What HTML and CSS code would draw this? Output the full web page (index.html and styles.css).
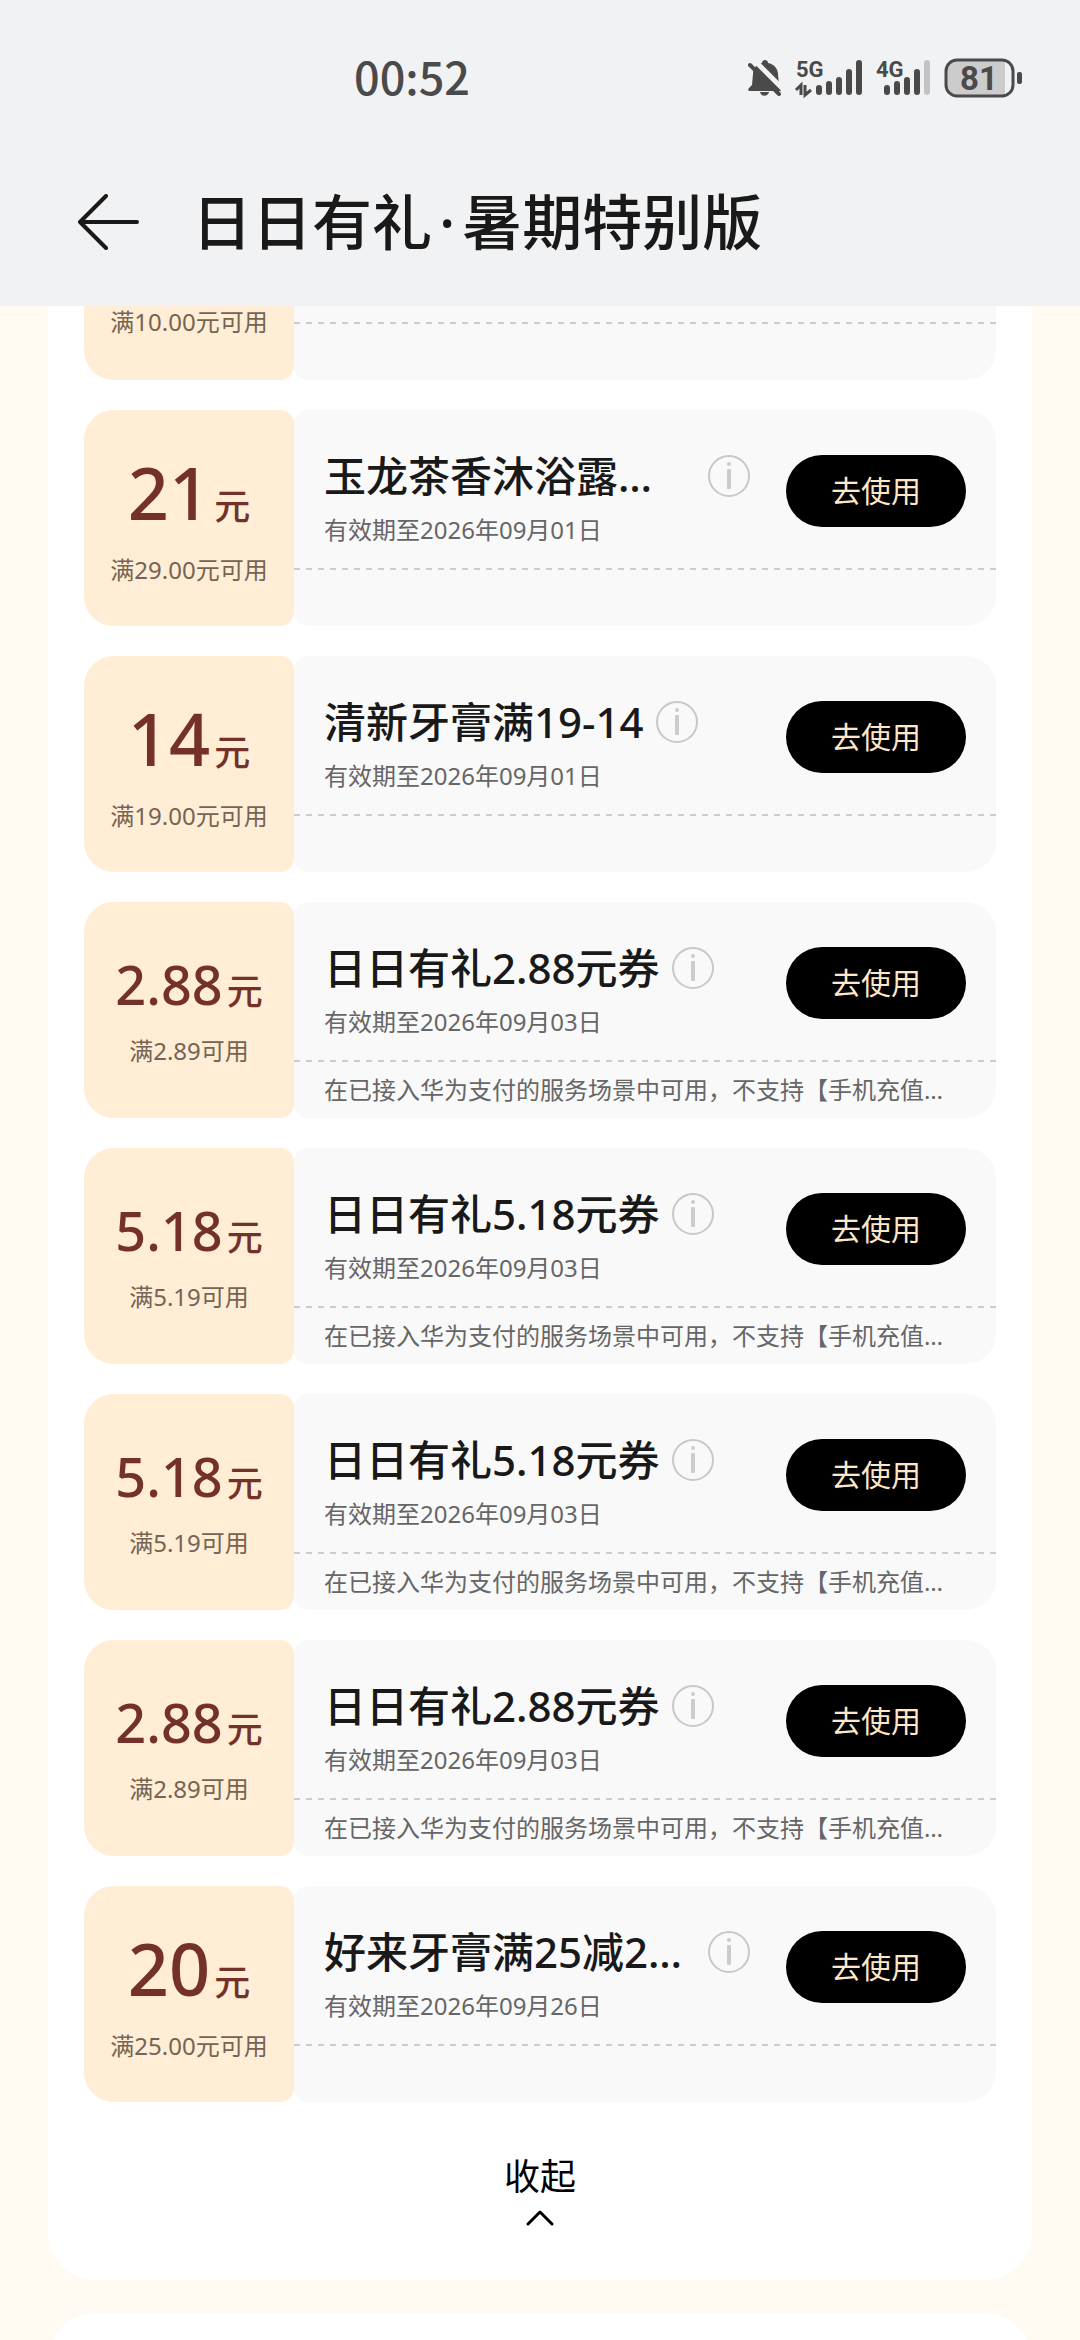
FILE: index.html
```html
<!DOCTYPE html>
<html lang="zh-CN">
<head>
  <meta charset="UTF-8">
  <meta name="viewport" content="width=device-width, initial-scale=1.0">
  <title>日日有礼·暑期特别版</title>
  <link rel="stylesheet" href="styles.css">
</head>
<body>
  <!-- Shared icon -->
  <svg class="sprite" aria-hidden="true">
    <symbol id="icon-info" viewBox="0 0 42 42">
      <circle cx="21" cy="21" r="20" fill="none" stroke="#c8c8c8" stroke-width="2"/>
      <rect x="19" y="14" width="4" height="20" rx="1" fill="#cccccc"/>
      <circle cx="21" cy="9" r="2" fill="#cccccc"/>
    </symbol>
  </svg>

  <header class="header">
    <div class="status-bar">
      <time class="clock">00:52</time>
      <div class="status-icons">
        <svg class="icon-bell" viewBox="0 0 34 36" width="34" height="36">
          <path d="M1 31 C0 30 0 29 1 28 L4 25 L5 14 C5 8 9 4 14 3 C14 -1 20 -1 20 3 C26 4 30 9 30 14 L31 25 L33 31 Z" fill="#4a4a4a"/>
          <path d="M12 32 H21 C20 37 13 37 12 32 Z" fill="#4a4a4a"/>
          <path d="M5 -1 L38 32" stroke="#f1f2f4" stroke-width="5"/>
          <path d="M2 5 L31 34" stroke="#4a4a4a" stroke-width="4" stroke-linecap="round"/>
        </svg>
        <svg class="icon-signal" viewBox="0 0 66 46" width="66" height="46">
          <text class="signal-text" x="0" y="22">5G</text>
          <path d="M0 35 L5 30 V40 M9 30 V40 L15 35" fill="none" stroke="#4a4a4a" stroke-width="3"/>
          <path d="M23 33 V37 M33 29 V37 M43 25 V37 M53 17 V37 M63 8 V37" stroke="#4a4a4a" stroke-width="6" stroke-linecap="round"/>
        </svg>
        <svg class="icon-signal" viewBox="0 0 54 46" width="54" height="46">
          <text class="signal-text" x="0" y="22">4G</text>
          <path d="M11 33 V37 M21 29 V37 M31 25 V37 M41 17 V37" stroke="#4a4a4a" stroke-width="6" stroke-linecap="round"/>
          <path d="M51 8 V37" stroke="#c2c3c4" stroke-width="6" stroke-linecap="round"/>
        </svg>
        <svg class="icon-battery" viewBox="0 0 80 40" width="80" height="40">
          <path d="M12 3 H61 V37 H12 Q3 37 3 28 V12 Q3 3 12 3 Z" fill="#cccccd"/>
          <rect x="2" y="2" width="67" height="36" rx="11" fill="none" stroke="#4a4a4a" stroke-width="3"/>
          <rect x="73" y="14" width="5" height="12" rx="2" fill="#4a4a4a"/>
          <text class="battery-text" x="35" y="32" text-anchor="middle">81</text>
        </svg>
      </div>
    </div>
    <div class="title-bar">
      <button class="back" type="button" aria-label="返回">
        <svg viewBox="0 0 62 56" width="62" height="56" fill="none" stroke="#191919" stroke-width="4" stroke-linecap="round" stroke-linejoin="round">
          <path d="M59 28 H2 L28 2 M2 28 L28 54"/>
        </svg>
      </button>
      <h1>日日有礼<span class="dot">·</span>暑期特别版</h1>
    </div>
  </header>

  <main class="content">
    <section class="panel">
      <ul class="coupons">
        <li class="coupon coupon-cut">
          <div class="stub">
            <p class="condition">满10.00元可用</p>
          </div>
          <div class="body">
            <div class="main"></div>
            <div class="note"></div>
          </div>
        </li>

        <li class="coupon">
          <div class="stub">
            <p class="amount amount-large">21<span class="unit">元</span></p>
            <p class="condition">满29.00元可用</p>
          </div>
          <div class="body">
            <div class="main">
              <div class="info">
                <div class="name-row">
                  <h2 class="name name-long">玉龙茶香沐浴露…</h2>
                  <button class="info-btn" type="button" aria-label="详情"><svg width="42" height="42"><use href="#icon-info"/></svg></button>
                </div>
                <p class="date">有效期至2026年09月01日</p>
              </div>
              <button class="use-btn" type="button">去使用</button>
            </div>
            <div class="note"></div>
          </div>
        </li>

        <li class="coupon">
          <div class="stub">
            <p class="amount amount-large">14<span class="unit">元</span></p>
            <p class="condition">满19.00元可用</p>
          </div>
          <div class="body">
            <div class="main">
              <div class="info">
                <div class="name-row">
                  <h2 class="name">清新牙膏满19-14</h2>
                  <button class="info-btn" type="button" aria-label="详情"><svg width="42" height="42"><use href="#icon-info"/></svg></button>
                </div>
                <p class="date">有效期至2026年09月01日</p>
              </div>
              <button class="use-btn" type="button">去使用</button>
            </div>
            <div class="note"></div>
          </div>
        </li>

        <li class="coupon">
          <div class="stub">
            <p class="amount">2.88<span class="unit">元</span></p>
            <p class="condition">满2.89可用</p>
          </div>
          <div class="body">
            <div class="main">
              <div class="info">
                <div class="name-row">
                  <h2 class="name">日日有礼2.88元券</h2>
                  <button class="info-btn" type="button" aria-label="详情"><svg width="42" height="42"><use href="#icon-info"/></svg></button>
                </div>
                <p class="date">有效期至2026年09月03日</p>
              </div>
              <button class="use-btn" type="button">去使用</button>
            </div>
            <p class="note">在已接入华为支付的服务场景中可用，不支持【手机充值…</p>
          </div>
        </li>

        <li class="coupon">
          <div class="stub">
            <p class="amount">5.18<span class="unit">元</span></p>
            <p class="condition">满5.19可用</p>
          </div>
          <div class="body">
            <div class="main">
              <div class="info">
                <div class="name-row">
                  <h2 class="name">日日有礼5.18元券</h2>
                  <button class="info-btn" type="button" aria-label="详情"><svg width="42" height="42"><use href="#icon-info"/></svg></button>
                </div>
                <p class="date">有效期至2026年09月03日</p>
              </div>
              <button class="use-btn" type="button">去使用</button>
            </div>
            <p class="note">在已接入华为支付的服务场景中可用，不支持【手机充值…</p>
          </div>
        </li>

        <li class="coupon">
          <div class="stub">
            <p class="amount">5.18<span class="unit">元</span></p>
            <p class="condition">满5.19可用</p>
          </div>
          <div class="body">
            <div class="main">
              <div class="info">
                <div class="name-row">
                  <h2 class="name">日日有礼5.18元券</h2>
                  <button class="info-btn" type="button" aria-label="详情"><svg width="42" height="42"><use href="#icon-info"/></svg></button>
                </div>
                <p class="date">有效期至2026年09月03日</p>
              </div>
              <button class="use-btn" type="button">去使用</button>
            </div>
            <p class="note">在已接入华为支付的服务场景中可用，不支持【手机充值…</p>
          </div>
        </li>

        <li class="coupon">
          <div class="stub">
            <p class="amount">2.88<span class="unit">元</span></p>
            <p class="condition">满2.89可用</p>
          </div>
          <div class="body">
            <div class="main">
              <div class="info">
                <div class="name-row">
                  <h2 class="name">日日有礼2.88元券</h2>
                  <button class="info-btn" type="button" aria-label="详情"><svg width="42" height="42"><use href="#icon-info"/></svg></button>
                </div>
                <p class="date">有效期至2026年09月03日</p>
              </div>
              <button class="use-btn" type="button">去使用</button>
            </div>
            <p class="note">在已接入华为支付的服务场景中可用，不支持【手机充值…</p>
          </div>
        </li>

        <li class="coupon">
          <div class="stub">
            <p class="amount amount-large">20<span class="unit">元</span></p>
            <p class="condition">满25.00元可用</p>
          </div>
          <div class="body">
            <div class="main">
              <div class="info">
                <div class="name-row">
                  <h2 class="name name-long">好来牙膏满25减2…</h2>
                  <button class="info-btn" type="button" aria-label="详情"><svg width="42" height="42"><use href="#icon-info"/></svg></button>
                </div>
                <p class="date">有效期至2026年09月26日</p>
              </div>
              <button class="use-btn" type="button">去使用</button>
            </div>
            <div class="note"></div>
          </div>
        </li>
      </ul>

      <button class="collapse" type="button">
        收起
        <svg viewBox="0 0 28 16" width="28" height="16" fill="none" stroke="#000000" stroke-width="3" stroke-linecap="round" stroke-linejoin="round">
          <path d="M2 14 L14 2 L26 14"/>
        </svg>
      </button>
    </section>

    <section class="panel panel-next"></section>
  </main>
</body>
</html>
```

FILE: styles.css
```css
* {
  margin: 0;
  padding: 0;
  box-sizing: border-box;
}

body {
  display: flex;
  flex-direction: column;
  height: 100vh;
  overflow: hidden;
  background-color: #fffaf2;
  font-family: "Noto Sans", "Noto Sans CJK SC", sans-serif;
  color: #191919;
}

button {
  border: none;
  background: none;
  font-family: inherit;
  color: inherit;
  cursor: pointer;
}

svg {
  display: block;
}

.sprite {
  display: none;
}

/* Header */
.header {
  flex: none;
  background-color: #f1f2f4;
}

.status-bar {
  display: flex;
  justify-content: space-between;
  align-items: center;
  height: 156px;
  padding: 0 56px 0 354px;
}

.clock {
  padding-bottom: 4px;
  font-family: "Noto Sans CJK SC", sans-serif;
  font-size: 45px;
  font-weight: 500;
  line-height: 60px;
  color: #4a4a4a;
}

.status-icons {
  display: flex;
  align-items: center;
  gap: 14px;
}

.icon-signal,
.icon-battery {
  overflow: visible;
}

.signal-text {
  font-family: Roboto, sans-serif;
  font-size: 22px;
  font-weight: 700;
  fill: #4a4a4a;
}

.battery-text {
  font-family: Roboto, sans-serif;
  font-size: 33px;
  font-weight: 700;
  fill: #4a4a4a;
}

.title-bar {
  display: flex;
  align-items: center;
  gap: 52px;
  height: 150px;
  padding: 0 78px 18px;
}

.title-bar h1 {
  font-size: 60px;
  font-weight: 500;
  line-height: 80px;
}

.dot {
  margin: 0 7px;
}

/* Coupon panel */
.content {
  flex: 1;
  min-height: 0;
  overflow: hidden;
  padding: 0 48px;
}

.panel {
  padding: 0 36px 54px;
  background-color: #ffffff;
  border-radius: 0 0 48px 48px;
}

.panel-next {
  height: 120px;
  margin-top: 33px;
  border-radius: 48px;
}

.coupons {
  display: flex;
  flex-direction: column;
  gap: 30px;
  list-style: none;
}

.coupon {
  display: flex;
  height: 216px;
}

.stub {
  display: flex;
  flex-direction: column;
  justify-content: center;
  align-items: center;
  gap: 20px;
  flex: none;
  width: 210px;
  background-color: #ffedd6;
  border-radius: 30px 14px 14px 30px;
}

.amount {
  font-size: 54px;
  font-weight: 500;
  line-height: 62px;
  color: #743127;
}

.amount-large {
  font-size: 72px;
  line-height: 84px;
}

.unit {
  margin-left: 4px;
  font-size: 36px;
  line-height: 1;
}

.condition {
  font-size: 24px;
  line-height: 32px;
  color: #756453;
}

.body {
  flex: 1;
  min-width: 0;
  background-color: #f9f9f9;
  border-radius: 14px 30px 30px 14px;
}

.main {
  display: flex;
  justify-content: space-between;
  gap: 36px;
  height: 158px;
  padding: 38px 30px 0;
}

.info {
  flex: 1;
  min-width: 0;
}

.name-row {
  display: flex;
  align-items: center;
  gap: 12px;
  height: 56px;
}

.name {
  font-size: 42px;
  font-weight: 500;
  line-height: 56px;
  white-space: nowrap;
}

.name-long {
  flex: 1;
}

.date {
  margin-top: 10px;
  font-size: 24px;
  line-height: 32px;
  color: #666666;
}

.use-btn {
  flex: none;
  width: 180px;
  height: 72px;
  margin-top: 7px;
  padding-bottom: 5px;
  border-radius: 36px;
  background-color: #000000;
  font-size: 30px;
  color: #ffe6c8;
}

/* Dashed rule is drawn along the top of the note */
.note {
  height: 58px;
  padding: 0 30px;
  background: repeating-linear-gradient(to right, #cccccc 0 6px, transparent 6px 12px) top left / 100% 2px no-repeat;
  font-size: 24px;
  line-height: 60px;
  color: #666666;
  white-space: nowrap;
  overflow: hidden;
}

/* Coupon scrolled half under the header */
.coupon-cut {
  height: 74px;
}

.coupon-cut .stub {
  justify-content: flex-start;
  border-radius: 0 0 14px 30px;
}

.coupon-cut .body {
  border-radius: 0 0 30px 14px;
}

.coupon-cut .main {
  height: 16px;
  padding: 0;
}

/* Collapse */
.collapse {
  display: flex;
  flex-direction: column;
  align-items: center;
  gap: 8px;
  margin: 50px auto 0;
  font-size: 36px;
  line-height: 50px;
  color: #000000;
}
```
